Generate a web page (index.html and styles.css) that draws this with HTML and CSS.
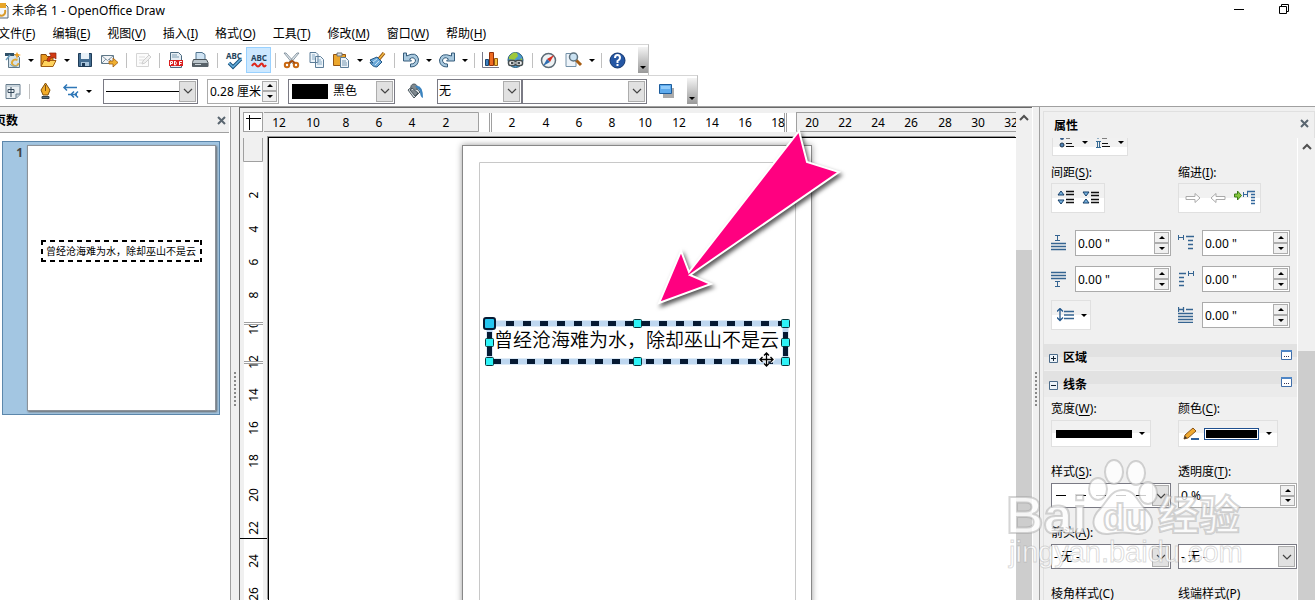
FILE: index.html
```html
<!DOCTYPE html>
<html lang="zh-CN">
<head>
    <meta charset="UTF-8">
    <meta name="viewport" content="width=device-width, initial-scale=1.0">
    <title>未命名 1 - OpenOffice Draw</title>
    <link rel="stylesheet" href="styles.css">
</head>
<body>
    <!-- Shared shapes -->
    <svg class="defs" width="0" height="0" aria-hidden="true">
        <symbol id="chevron" viewBox="0 0 10 6"><path d="M1 1l4 4 4-4" fill="none" stroke="#444" stroke-width="1.2"/></symbol>
        <symbol id="scroll-up" viewBox="0 0 10 6"><path d="M1 5.500l4-4 4 4" fill="none" stroke="#505050" stroke-width="2"/></symbol>
        <symbol id="close" viewBox="0 0 9 9"><path d="M1 1l7 7M8 1L1 8" stroke="#5a6670" stroke-width="2"/></symbol>
        <symbol id="more" viewBox="0 0 11 10"><path d="M.5 .5h10v9H.5z" fill="#fff" stroke="#3f6da8"/><path d="M0 0h11v2H0z" fill="#4f86c6"/><path d="M3 6h1v1H3zm2 0h1v1H5zm2 0h1v1H7z" fill="#335"/></symbol>
    </svg>

    <header class="titlebar">
        <svg width="9" height="16" viewBox="7 0 9 16"><path d="M0 1h12l3 3v11H0z" fill="#f5f7f9" stroke="#56697a"/><path d="M7 0h6v5H7z" fill="#e7a52a"/><path d="M6 12c4 2 7-1 6-5" fill="none" stroke="#d89b2c" stroke-width="2"/></svg>
        <h1>未命名 1 - OpenOffice Draw</h1>
        <div class="window-controls">
            <button aria-label="最小化"><svg width="11" height="11"><path d="M0 5.500h10" stroke="#000"/></svg></button>
            <button aria-label="还原"><svg width="11" height="11"><path d="M.5 2.500h7v7h-7zM2.500 2.500v-2h7v7h-2" fill="none" stroke="#000"/></svg></button>
        </div>
    </header>

    <nav class="menubar">
        <a href="#">文件(<u>F</u>)</a>
        <a href="#">编辑(<u>E</u>)</a>
        <a href="#">视图(<u>V</u>)</a>
        <a href="#">插入(<u>I</u>)</a>
        <a href="#">格式(<u>O</u>)</a>
        <a href="#">工具(<u>T</u>)</a>
        <a href="#">修改(<u>M</u>)</a>
        <a href="#">窗口(<u>W</u>)</a>
        <a href="#">帮助(<u>H</u>)</a>
    </nav>

    <!-- Standard toolbar -->
    <div class="toolbar standard">
        <button class="tool" aria-label="新建"><svg width="16" height="16"><path d="M3.500 2.500h8l3 3v10h-11z" fill="#d3e2ec" stroke="#607888"/><path d="M0 1h9v3H0z" fill="#2f5068"/><path d="M1 8l4-5" stroke="#6aa0c0" stroke-width="1.500"/><path d="M12 0l1 2 3 1-3 1-1 3-1-3-2-1 2-1z" fill="#f0a020"/><path d="M12.500 8c-5-2-8 4-3 6 3 0 4-2 4-3" fill="none" stroke="#e0aa38" stroke-width="2"/><path d="M5 12c1 2 4 3 7 2" fill="none" stroke="#76aacb"/></svg></button>
        <button class="drop" aria-label="新建选项"></button>
        <button class="tool" aria-label="打开"><svg width="17" height="16"><path d="M1 14V2.500h5l1 2h6V14z" fill="#e99a1e" stroke="#8a4b0c"/><path d="M1 14.500l3-6h12l-3 6z" fill="#ffd35c" stroke="#a05d10"/><path d="M7 9c0-3 1-4 4-5L9.500 1H16v6l-2-1.500c-3 0-4 1-4.500 4z" fill="#d33a13" stroke="#8c240a" stroke-width=".7"/></svg></button>
        <button class="drop" aria-label="打开选项"></button>
        <button class="tool" aria-label="保存"><svg width="16" height="16"><path d="M1.500 1.500h13v13h-13z" fill="#446d91" stroke="#1f3b57"/><path d="M4 1h8v6H4z" fill="#e8f1f8"/><path d="M4 10h8v4H4z" fill="#a9c5dc"/><path d="M5 11h3v3H5z" fill="#1f3b57"/></svg></button>
        <button class="tool" aria-label="邮件"><svg width="17" height="14"><path d="M.5 2.500h12v8H.5z" fill="#f3f5f7" stroke="#607888"/><path d="M1 3l5.500 4.500L12 3M1 10l4-4m7 4L8 6" fill="none" stroke="#8296a5"/><path d="M8 8h4V5l5 4.500L12 14v-3H8z" fill="#f0b030" stroke="#9c5b12" stroke-width=".8"/></svg></button>
        <span class="sep"></span>
        <button class="tool faded" aria-label="编辑文件"><svg width="16" height="16"><path d="M1.500 1.500h12v13h-12z" fill="#fafafa" stroke="#999"/><path d="M4 5h6M4 8h5M4 11h3" stroke="#aaa"/><path d="M7 12l1-3 6-6 2 2-6 6z" fill="#ddd" stroke="#888"/></svg></button>
        <span class="sep"></span>
        <button class="tool" aria-label="导出 PDF"><svg width="14" height="16"><path d="M1.500.5h8l3 3v12h-11z" fill="#e6eef4" stroke="#4c6a80"/><path d="M3 3h5M3 5h7" stroke="#7d9cb2"/><path d="M0 8h14v6H0z" fill="#d91f1f"/><path d="M1.500 13V9.500h2v2h-2M5.500 9v4h1q2-2 0-3.500h-1m5 3.500V9.500h2.500m-2 2h1.500" fill="none" stroke="#fff"/></svg></button>
        <button class="tool" aria-label="打印"><svg width="17" height="16"><path d="M4 8V.5h6l3 2V8z" fill="#cfe3f3" stroke="#51748f"/><path d="M1.500 7.500h13l1.500 3v4H.5v-4z" fill="#bcc6cc" stroke="#4a5359"/><path d="M1 11h15v4H1z" fill="#59636a"/><path d="M3 12.500h6" stroke="#cdd5da"/></svg></button>
        <span class="sep"></span>
        <button class="tool" aria-label="拼写检查"><svg width="18" height="17"><text class="abc" x="9" y="7">ABC</text><path d="M4 11l4 4 8-8" fill="none" stroke="#17517d" stroke-width="3.500"/><path d="M4 11l4 4 8-8" fill="none" stroke="#68b2e0" stroke-width="1.500"/></svg></button>
        <button class="tool active" aria-label="自动拼写检查"><svg width="18" height="17"><text class="abc" x="9" y="9">ABC</text><path d="M2 14q2-4 4-1t4 0 3 0 3 0" fill="none" stroke="#df291e" stroke-width="2.200"/></svg></button>
        <span class="sep"></span>
        <button class="tool" aria-label="剪切"><svg width="17" height="17"><path d="M1 1l2 0 9 10-2 1zM16 1l-2 0-9 10 2 1z" fill="#e3eaee" stroke="#718390" stroke-width=".8"/><circle cx="4" cy="13" r="2.200" fill="none" stroke="#c96913" stroke-width="2"/><circle cx="13" cy="13" r="2.200" fill="none" stroke="#c96913" stroke-width="2"/><path d="M6 11l3-2 3 2" fill="none" stroke="#a84b0b" stroke-width="2"/></svg></button>
        <button class="tool" aria-label="复制"><svg width="16" height="16"><path d="M1 .5h6l2 2v8H1zM6.500 4.500h5l3 3v8h-8z" fill="#edf4fa" stroke="#5c7d98"/><path d="M3 3h3M3 5h4M3 7h3M8 8h4M8 10h5M8 12h5" stroke="#89abc4"/></svg></button>
        <button class="tool" aria-label="粘贴"><svg width="17" height="16"><path d="M.5 2.500h12v11H.5z" fill="#eca72d" stroke="#945411"/><path d="M4 1h5v3H4z" fill="#dbe0e2" stroke="#6c7377"/><path d="M7.500 5.500h5l3 3v7h-8z" fill="#eef4fa" stroke="#5c7d98"/><path d="M9 9h4M9 11h5M9 13h5" stroke="#7899b1"/></svg></button>
        <button class="drop" aria-label="粘贴选项"></button>
        <button class="tool" aria-label="格式刷"><svg width="17" height="16"><path d="M10 7l5-6" stroke="#945411" stroke-width="3.500"/><path d="M10 7l5-6" stroke="#f0b844" stroke-width="1.500"/><path d="M1 8l7-3 5 5-5 5q-5 0-7-5 2 1 3 1z" fill="#6ba8d8" stroke="#245987"/><path d="M4 10l4-3m-2 6l4-4" stroke="#c9e3f5"/></svg></button>
        <span class="sep"></span>
        <button class="tool" aria-label="撤消"><svg width="16" height="16"><path d="M.5 1h3v3q10-5 12 3 0 8-8 8v-3q5 0 5-4-2-4-6-1l2 2H.5z" fill="#a9c9df" stroke="#365d7c"/></svg></button>
        <button class="drop" aria-label="撤消选项"></button>
        <button class="tool" aria-label="恢复"><svg width="16" height="16"><path d="M15.500 1h-3v3Q2 0 .5 8q0 7 8 7v-3q-5 0-5-4 2-4 6-1l-2 2h8z" fill="#a9c9df" stroke="#365d7c"/></svg></button>
        <button class="drop" aria-label="恢复选项"></button>
        <span class="sep"></span>
        <button class="tool" aria-label="图表"><svg width="17" height="16"><path d="M.5 0v15.500H17" fill="none" stroke="#778"/><path d="M3.500 7.500h3v6h-3z" fill="#3e7fc0" stroke="#1b466f"/><path d="M7.500 .5h4v13h-4z" fill="#ef6b21" stroke="#8f300c"/><path d="M12.500 6.500h3v7h-3z" fill="#f5bd3a" stroke="#935c10"/></svg></button>
        <button class="tool" aria-label="超链接"><svg width="17" height="17"><circle cx="8.500" cy="8" r="7.500" fill="#4d9bd0" stroke="#285b79"/><path d="M2 5q4-6 8-4l1 3-4 4-5-1zm9 4l4-3v4l-3 3z" fill="#9fc83a"/><rect x="1.500" y="8.500" width="7" height="5" rx="2" fill="#eee" stroke="#454d50" stroke-width="1.500"/><rect x="8.500" y="8.500" width="7" height="5" rx="2" fill="#eee" stroke="#454d50" stroke-width="1.500"/><path d="M4 11h9" stroke="#454d50" stroke-width="2"/><path d="M6 11h5" stroke="#fff"/></svg></button>
        <span class="sep"></span>
        <button class="tool" aria-label="导航"><svg width="17" height="17"><circle cx="8.500" cy="8.500" r="7" fill="#eef3f5" stroke="#5c6b76" stroke-width="1.500"/><path d="M14 3L7 7l3 3z" fill="#d72e22"/><path d="M3 14l4-7 3 3z" fill="#2e6db1"/></svg></button>
        <button class="tool" aria-label="缩放"><svg width="17" height="16"><path d="M1 1.500h10v13H1z" fill="#edf4fa" stroke="#7491a8"/><path d="M11 8l5 5" stroke="#a65c12" stroke-width="3"/><circle cx="8.500" cy="5" r="4" fill="#cae2f2" stroke="#5e7380" stroke-width="1.500"/></svg></button>
        <button class="drop" aria-label="缩放选项"></button>
        <span class="sep"></span>
        <button class="tool" aria-label="帮助"><svg width="17" height="17"><circle cx="8.500" cy="8.500" r="7.500" fill="#2557a4" stroke="#12356d"/><path d="M6 6q0-3 2.500-3T11 6q0 1.500-2.500 3v2m0 1v2" fill="none" stroke="#fff" stroke-width="2"/></svg></button>
        <button class="handle" aria-label="工具栏选项"></button>
    </div>

    <!-- Line and filling toolbar -->
    <div class="toolbar filling">
        <button class="tool" aria-label="样式和格式"><svg width="16" height="15"><path d="M1 .5h14v10l-4 4H1z" fill="#e9eff3" stroke="#667b8b"/><path d="M11 14v-4h4" fill="#c9d6df" stroke="#667b8b"/><path d="M3 5.500h6v3H3zM6 3v10" fill="none" stroke="#34485a"/><path d="M1 2h14" stroke="#a7b8c4"/></svg></button>
        <span class="sep"></span>
        <button class="tool" aria-label="线条"><svg width="11" height="17"><path d="M5.500 0L1 7l2 5h5l2-5z" fill="#f2ac28" stroke="#80500d"/><path d="M5.500 2v6" stroke="#80500d"/><path d="M2 13.500h7v2H2z" fill="#5a7385" stroke="#304250"/></svg></button>
        <button class="tool" aria-label="箭头样式"><svg width="16" height="14"><path d="M1 3.500h13M4 .5l-3 3 3 3" fill="none" stroke="#2f77b7" stroke-width="1.500"/><path d="M5 10.500h9M11 7.500l-3 3 3 3m4-6l-3 3 3 3" fill="none" stroke="#2f77b7" stroke-width="1.500"/></svg></button>
        <button class="drop" aria-label="箭头样式选项"></button>
        <label class="combo line-style"><select class="solid-line" aria-label="线条样式"><option></option></select><span class="combo-arrow"><svg width="10" height="6"><use href="#chevron"/></svg></span></label>
        <div class="spin line-width"><input type="text" aria-label="线条宽度" value="0.28 厘米"><div class="spin-buttons"><button aria-label="增加"></button><button aria-label="减少"></button></div></div>
        <label class="combo line-color"><span class="swatch"></span><select aria-label="线条颜色"><option>黑色</option></select><span class="combo-arrow"><svg width="10" height="6"><use href="#chevron"/></svg></span></label>
        <button class="tool" aria-label="区域"><svg width="17" height="17"><path d="M1 7l6-5 6 7-6 6z" fill="#d4dadd" stroke="#4b575e"/><path d="M4 7Q3 1 7 1t3 6M3 7l5 6 3-3-6-5z" fill="#7f898f" stroke="#49555d"/><path d="M8 3q8-2 8 12-3-1-3-7z" fill="#3a83bf"/></svg></button>
        <label class="combo area-style"><select aria-label="区域样式"><option>无</option></select><span class="combo-arrow"><svg width="10" height="6"><use href="#chevron"/></svg></span></label>
        <label class="combo area-fill"><select aria-label="区域填充"><option></option></select><span class="combo-arrow"><svg width="10" height="6"><use href="#chevron"/></svg></span></label>
        <button class="tool shadow-tool" aria-label="阴影"><svg width="16" height="14"><path d="M4 4h11v10H4z" fill="#aaa"/><path d="M.5 .5h12v9H.5z" fill="#5fabed" stroke="#1c5c9c"/><path d="M2 2h9v3H2z" fill="#91cbfa"/></svg></button>
        <button class="handle" aria-label="工具栏选项"></button>
    </div>

    <main>
        <!-- Page list -->
        <aside class="pages">
            <div class="pages-head">
                <h2>页数</h2>
                <button class="close" aria-label="关闭"><svg width="9" height="9"><use href="#close"/></svg></button>
            </div>
            <div class="thumb">
                <span class="thumb-number">1</span>
                <div class="thumb-page">
                    <p>曾经沧海难为水，除却巫山不是云</p>
                </div>
            </div>
        </aside>
        <div class="splitter"><i></i></div>

        <!-- Rulers and drawing area -->
        <section class="workspace">
            <div class="corner"><svg width="18" height="18"><path d="M2 5.500h15M5.500 2v15" stroke="#000"/></svg></div>
            <svg class="ruler-x" width="100%" height="20">
                <path d="M0 .5h214.500v19H0" fill="#f0f0f0" stroke="#a0a0a0"/>
                <path d="M215 1h318v19H215z" fill="#fff"/>
                <path d="M533 .5h1200v19H532.500V0" fill="#f0f0f0" stroke="#a0a0a0"/>
                <path d="M225.500 1v19M227.500 1v19M520.500 1v19M522.500 1v19" stroke="#a0a0a0"/>
                <text x="15" y="15">12</text><text x="49" y="15">10</text><text x="82" y="15">8</text><text x="115" y="15">6</text><text x="148" y="15">4</text><text x="182" y="15">2</text>
                <text x="248" y="15">2</text><text x="282" y="15">4</text><text x="315" y="15">6</text><text x="348" y="15">8</text><text x="381" y="15">10</text><text x="415" y="15">12</text><text x="448" y="15">14</text><text x="481" y="15">16</text><text x="514" y="15">18</text>
                <text x="548" y="15">20</text><text x="581" y="15">22</text><text x="614" y="15">24</text><text x="647" y="15">26</text><text x="681" y="15">28</text><text x="714" y="15">30</text><text x="747" y="15">32</text>
            </svg>
            <svg class="ruler-y" width="20" height="100%">
                <path d="M1 0h19v2000H1z" fill="#fff"/>
                <path d="M.5 0v23.500h19V0" fill="#f0f0f0" stroke="#a0a0a0"/>
                <g transform="rotate(-90)">
                    <text x="-57" y="15">2</text><text x="-91" y="15">4</text><text x="-124" y="15">6</text><text x="-157" y="15">8</text><text x="-190" y="15">10</text><text x="-224" y="15">12</text><text x="-257" y="15">14</text><text x="-290" y="15">16</text><text x="-323" y="15">18</text><text x="-357" y="15">20</text><text x="-390" y="15">22</text><text x="-423" y="15">24</text><text x="-456" y="15">26</text>
                </g>
                <path d="M1 182h19v4H1zM1 223h19v3H1z" fill="#fff"/>
                <path d="M1 184.500h19M1 186.500h19M1 223.500h19M1 225.500h19" stroke="#a0a0a0"/>
                <path d="M-3 400.500h27" stroke="#000"/>
            </svg>
            <div class="canvas">
                <svg width="100%" height="100%">
                    <rect class="sheet" x="193.500" y="7.500" width="349" height="900"/>
                    <path d="M210.500 900V24.500h316V900" fill="none" stroke="#c8c8c8"/>
                    <path d="M220.500 185.500h296v38h-296z" fill="none" stroke="#bed7f0" stroke-width="6"/>
                    <path d="M237 185.500h280M224 223.500h293" stroke="#061a33" stroke-width="5" stroke-dasharray="8 9"/>
                    <path d="M220.500 194v9M220.500 209v9M516.500 194v9M516.500 209v9" stroke="#061a33" stroke-width="5"/>
                    <text class="drawn-text" x="225" y="209">曾经沧海难为水，除却巫山不是云</text>
                    <rect x="215" y="180" width="11" height="11" rx="2" fill="#25c5f0" stroke="#061a33" stroke-width="2"/>
                    <g fill="#2ff3f7" stroke="#08363c">
                        <rect x="364.500" y="181.500" width="8" height="8" rx="1"/><rect x="512.500" y="181.500" width="8" height="8" rx="1"/>
                        <rect x="216.500" y="200.500" width="8" height="8" rx="1"/><rect x="512.500" y="200.500" width="8" height="8" rx="1"/>
                        <rect x="216.500" y="219.500" width="8" height="8" rx="1"/><rect x="364.500" y="219.500" width="8" height="8" rx="1"/><rect x="512.500" y="219.500" width="8" height="8" rx="1"/>
                    </g>
                    <g transform="translate(490 214)" fill="none">
                        <path d="M7.500 1v13M1 7.500h13M5 3.500L7.500 1 10 3.500M5 11.500L7.500 14 10 11.500M3.500 5L1 7.500 3.500 10M11.500 5L14 7.500 11.500 10" stroke="#fff" stroke-width="3.500"/>
                        <path d="M7.500 1v13M1 7.500h13M5 3.500L7.500 1 10 3.500M5 11.500L7.500 14 10 11.500M3.500 5L1 7.500 3.500 10M11.500 5L14 7.500 11.500 10" stroke="#000" stroke-width="1.300"/>
                    </g>
                    <path class="pointer" d="M530-7l8 31 32 10-149 103 21 9-52 19 22-52 8 21z"/>
                </svg>
            </div>
            <div class="scrollbar view-scroll"><svg width="10" height="7"><use href="#scroll-up"/></svg><i></i></div>
        </section>
        <div class="splitter right"><i></i></div>

        <!-- Properties -->
        <aside class="properties">
            <div class="props-head">
                <h2>属性</h2>
                <button class="close" aria-label="关闭"><svg width="9" height="9"><use href="#close"/></svg></button>
            </div>
            <div class="props-main">
                <div class="props-body">
                    <div class="group bullets">
                        <button aria-label="项目符号"><svg width="16" height="12"><circle cx="3" cy="1" r="2" fill="#335c8a"/><circle cx="3" cy="8" r="2" fill="#4e83b6" stroke="#1d344d"/><path d="M7 1h4M7 6.500h6M7 9.500h8" stroke="#111"/></svg></button>
                        <button class="drop" aria-label="项目符号选项"></button>
                        <button aria-label="编号"><svg width="16" height="12"><path d="M1 4.500h5M1 10.500h5M2.500 5v5M4.500 5v5M3 0v2" stroke="#356a94"/><path d="M7 1h5M7 6.500h6M7 9.500h8" stroke="#111"/></svg></button>
                        <button class="drop" aria-label="编号选项"></button>
                    </div>
                    <div class="columns">
                        <div>
                            <div class="label">间距(<u>S</u>):</div>
                            <div class="group">
                                <button aria-label="增大间距"><svg width="17" height="16"><path d="M1 5l3-4 3 4zM1 10h6l-3 4z" fill="#75b1df" stroke="#163f68"/><path d="M9 1.500h8M9 4.500h8M9 9.500h8M9 12.500h8" stroke="#111" stroke-width="1.400"/></svg></button>
                                <button aria-label="减小间距"><svg width="17" height="16"><path d="M1 2h6l-3 4zM1 13l3-4 3 4z" fill="#75b1df" stroke="#163f68"/><path d="M9 2.500h8M9 5.500h8M9 9.500h8M9 12.500h8" stroke="#111" stroke-width="1.400"/></svg></button>
                            </div>
                        </div>
                        <div>
                            <div class="label">缩进(<u>I</u>):</div>
                            <div class="group">
                                <button aria-label="增大缩进"><svg width="16" height="10"><path d="M1 3.500h9v-3l5 4.500-5 4.500v-3H1z" fill="#fff" stroke="#aaa"/></svg></button>
                                <button aria-label="减小缩进"><svg width="16" height="10"><path d="M15 3.500H6v-3L1 5l5 4.500v-3h9z" fill="#fff" stroke="#aaa"/></svg></button>
                                <button class="wide" aria-label="悬挂缩进"><svg width="21" height="16"><path d="M.5 4h3V1l4 4.500-4 4.500V7h-3z" fill="#86c83e" stroke="#3c7c16"/><path d="M9.500 2v5M9 4.500h4M13.500 2v5" stroke="#34689c"/><path d="M13 1.500h8M17 4.500h4M17 7.500h4M17 10.500h4M17 13.500h4" stroke="#34689c" stroke-width="1.500"/></svg></button>
                            </div>
                        </div>
                    </div>
                    <div class="columns fields">
                        <div class="field">
                            <svg width="16" height="16"><path d="M4 .5h5M6.500 0v6M4 5.500h5" stroke="#356491"/><path d="M0 8.500h15M0 11.500h15M0 14.500h15" stroke="#356491" stroke-width="1.500"/></svg>
                            <div class="spin"><input type="text" aria-label="段前间距" value='0.00 "'><div class="spin-buttons"><button aria-label="增加"></button><button aria-label="减少"></button></div></div>
                        </div>
                        <div class="field">
                            <svg width="16" height="16"><path d="M.5 0v5M0 2.500h5M5.500 0v5" stroke="#356491"/><path d="M8 1.500h8M10 5.500h5M10 9.500h5M10 13.500h5" stroke="#356491" stroke-width="1.500"/></svg>
                            <div class="spin"><input type="text" aria-label="文本前缩进" value='0.00 "'><div class="spin-buttons"><button aria-label="增加"></button><button aria-label="减少"></button></div></div>
                        </div>
                        <div class="field">
                            <svg width="16" height="16"><path d="M4 15.500h5M6.500 10v6M4 10.500h5" stroke="#356491"/><path d="M0 1.500h15M0 4.500h15M0 7.500h15" stroke="#356491" stroke-width="1.500"/></svg>
                            <div class="spin"><input type="text" aria-label="段后间距" value='0.00 "'><div class="spin-buttons"><button aria-label="增加"></button><button aria-label="减少"></button></div></div>
                        </div>
                        <div class="field">
                            <svg width="16" height="16"><path d="M10.500 0v5M10 2.500h5M15.500 0v5" stroke="#356491"/><path d="M1 2.500h7M1 6.500h5M1 10.500h5M1 14.500h5" stroke="#356491" stroke-width="1.500"/></svg>
                            <div class="spin"><input type="text" aria-label="文本后缩进" value='0.00 "'><div class="spin-buttons"><button aria-label="增加"></button><button aria-label="减少"></button></div></div>
                        </div>
                        <div class="group spacing">
                            <button aria-label="行距"><svg width="18" height="14"><path d="M3 1v11M0 3.500L3 .5l3 3M0 9.500l3 3 3-3" fill="none" stroke="#24588d" stroke-width="1.300"/><path d="M7 3.500h10M7 7h10M7 10.500h10" stroke="#356491" stroke-width="1.500"/></svg></button>
                            <button class="drop" aria-label="行距选项"></button>
                        </div>
                        <div class="field">
                            <svg width="16" height="16"><path d="M.5 0v5M0 2.500h5M5.500 0v5M8 2.500h7M0 6.500h15M0 9.500h15M0 12.500h15M0 15.500h15" stroke="#356491" stroke-width="1.300"/></svg>
                            <div class="spin"><input type="text" aria-label="首行缩进" value='0.00 "'><div class="spin-buttons"><button aria-label="增加"></button><button aria-label="减少"></button></div></div>
                        </div>
                    </div>

                    <div class="section-head">
                        <button aria-label="展开"><svg width="9" height="9"><path d="M.5 .5h8v8h-8z" fill="#edf3f8" stroke="#4c6b89"/><path d="M2 4.500h5M4.500 2v5" stroke="#123"/></svg></button>
                        <h3>区域</h3>
                        <button class="more" aria-label="更多选项"><svg width="11" height="10"><use href="#more"/></svg></button>
                    </div>
                    <div class="section-head">
                        <button aria-label="折叠"><svg width="9" height="9"><path d="M.5 .5h8v8h-8z" fill="#edf3f8" stroke="#4c6b89"/><path d="M2 4.500h5" stroke="#123"/></svg></button>
                        <h3>线条</h3>
                        <button class="more" aria-label="更多选项"><svg width="11" height="10"><use href="#more"/></svg></button>
                    </div>

                    <div class="columns line-props">
                        <div>
                            <div class="label">宽度(<u>W</u>):</div>
                            <div class="group picker">
                                <button class="bar-button" aria-label="宽度"><span class="bar"></span></button>
                                <button class="drop" aria-label="宽度选项"></button>
                            </div>
                        </div>
                        <div>
                            <div class="label">颜色(<u>C</u>):</div>
                            <div class="group picker">
                                <button class="bar-button" aria-label="颜色"><svg width="17" height="13"><path d="M1 12l1-4 8-7 3 3-8 7z" fill="#f0aa31" stroke="#8b551a"/><path d="M1 12l1-3 2 2z" fill="#333"/><path d="M8 12h8" stroke="#2e5f9b" stroke-width="2"/></svg><span class="bar framed"></span></button>
                                <button class="drop" aria-label="颜色选项"></button>
                            </div>
                        </div>
                        <div>
                            <label class="label" for="style">样式(<u>S</u>):</label>
                            <div class="combo"><select id="style" class="dashed-line"><option></option></select><span class="combo-arrow"><svg width="10" height="6"><use href="#chevron"/></svg></span></div>
                        </div>
                        <div class="to-edge">
                            <label class="label" for="transparency">透明度(<u>T</u>):</label>
                            <div class="spin"><input id="transparency" type="text" value="0 %"><div class="spin-buttons"><button aria-label="增加"></button><button aria-label="减少"></button></div></div>
                        </div>
                        <div>
                            <label class="label" for="arrow-start">箭头(<u>A</u>):</label>
                            <div class="combo"><select id="arrow-start"><option>- 无 -</option></select><span class="combo-arrow"><svg width="10" height="6"><use href="#chevron"/></svg></span></div>
                        </div>
                        <div class="to-edge">
                            <div class="label"></div>
                            <div class="combo"><select aria-label="箭头末端"><option>- 无 -</option></select><span class="combo-arrow"><svg width="10" height="6"><use href="#chevron"/></svg></span></div>
                        </div>
                        <div class="label">棱角样式(C)</div>
                        <div class="label">线端样式(P)</div>
                    </div>
                </div>
                <div class="scrollbar props-scroll"><svg width="10" height="7"><use href="#scroll-up"/></svg><i></i></div>
            </div>
        </aside>
    </main>

    <svg class="watermark" width="240" height="120">
        <g class="mark">
            <text x="1" y="76" font-size="52">Bai</text>
            <ellipse cx="93" cy="32" rx="9" ry="11"/>
            <ellipse cx="109" cy="15" rx="9" ry="12"/>
            <ellipse cx="131" cy="16" rx="9" ry="12"/>
            <ellipse cx="143" cy="36" rx="9" ry="11"/>
            <path d="M118 33c12 0 14 11 22 19 13 12 6 26-8 25-9-2-20-2-29 0-14 1-20-13-8-25 8-8 10-19 23-19z"/>
            <text x="98" y="73" font-size="36">du</text>
            <text class="cjk" x="153" y="73" font-size="41">经验</text>
        </g>
        <text class="site" x="4" y="105">jingyan.baidu.com</text>
    </svg>
</body>
</html>
```
FILE: styles.css
```css
* {
    margin: 0;
    padding: 0;
    box-sizing: border-box;
}

body {
    display: flex;
    flex-direction: column;
    position: relative;
    height: 100vh;
    overflow: hidden;
    background: #fff;
    color: #000;
    font-family: "Noto Sans", "Noto Sans CJK SC", sans-serif;
    font-size: 12px;
    line-height: 16px;
}

button {
    display: flex;
    align-items: center;
    justify-content: center;
    flex: none;
    border: none;
    background: none;
    font: inherit;
}

input,
select {
    flex: 1;
    min-width: 0;
    height: 100%;
    border: none;
    outline: none;
    background: #fff;
    color: #000;
    font: inherit;
    appearance: none;
}

svg {
    flex: none;
    display: block;
}

u {
    text-underline-offset: 2px;
}

.defs {
    position: absolute;
}

/* Title and menu */
.titlebar {
    display: flex;
    align-items: center;
    gap: 3px;
    height: 22px;
    flex: none;
}

.titlebar h1 {
    font-size: 12px;
    font-weight: 400;
}

.window-controls {
    display: flex;
    gap: 34px;
    margin: 0 25px 4px auto;
}

.menubar {
    display: flex;
    align-items: center;
    gap: 17px;
    height: 22px;
    flex: none;
    margin-left: -2px;
    padding-top: 2px;
}

.menubar a {
    color: #000;
    text-decoration: none;
}

/* Toolbars */
.toolbar {
    display: flex;
    align-items: center;
    align-self: flex-start;
    flex: none;
    border-top: 1px solid #d5d5d5;
    border-right: 1px solid #c0c0c0;
}

.standard {
    height: 31px;
    width: 649px;
}

.filling {
    height: 31px;
    width: 698px;
}

.tool {
    width: 25px;
    height: 26px;
}

.tool svg {
    overflow: visible;
}

.tool.active {
    background: #cce8ff;
    border: 1px solid #99d1ff;
}

.faded {
    opacity: 0.4;
}

.abc {
    font: bold 8px "Noto Sans", sans-serif;
    text-anchor: middle;
    fill: #24445c;
}

.drop {
    width: 11px;
    height: 20px;
}

.drop::before,
.handle::before {
    content: "";
    border: 3px solid transparent;
    border-top-color: #000;
    border-bottom: none;
}

.sep {
    width: 8px;
    height: 15px;
    flex: none;
    background: linear-gradient(#c0c0c0, #c0c0c0) no-repeat center / 1px 100%;
}

.handle {
    width: 10px;
    height: 26px;
    margin-left: auto;
    align-items: flex-end;
    padding-bottom: 4px;
    background: linear-gradient(#f4f4f4, #999);
}

.combo,
.spin {
    display: flex;
    align-items: center;
    height: 25px;
    flex: none;
    border: 1px solid #7a7a84;
    background: #fff;
}

.combo-arrow {
    display: flex;
    align-items: center;
    justify-content: center;
    width: 17px;
    height: 21px;
    flex: none;
    margin-right: 1px;
    border: 1px solid #adadad;
    background: #e1e1e1;
    pointer-events: none;
}

.spin {
    border-color: #ababab;
}

.spin input {
    padding-left: 2px;
}

.spin-buttons {
    display: flex;
    flex-direction: column;
    flex: none;
    width: 15px;
    margin-right: 1px;
    height: 100%;
    padding: 1px 0;
}

.spin-buttons button {
    flex: 1;
    border: 1px solid #adadad;
    background: #f0f0f0;
}

.spin-buttons button::before {
    content: "";
    border: 3px solid transparent;
    border-top: none;
    border-bottom-color: #000;
}

.spin-buttons button:last-child::before {
    transform: rotate(180deg);
}

.line-style {
    width: 95px;
    margin: 0 9px;
}

.solid-line {
    margin: 0 0 0 2px;
    background: linear-gradient(#000, #000) no-repeat center / 100% 1px;
}

.dashed-line {
    margin: 0 4px;
    background: repeating-linear-gradient(90deg, #000 0, #000 10px, transparent 10px, transparent 20px) no-repeat center / 100% 1px;
}

.line-width {
    width: 72px;
}

.line-color {
    width: 107px;
    margin: 0 8px 0 9px;
}

.swatch {
    width: 36px;
    height: 15px;
    margin: 0 5px 0 3px;
    background: #000;
}

.area-style {
    width: 85px;
    margin-left: 9px;
}

.area-style select {
    padding-left: 1px;
}

.area-fill {
    width: 125px;
}

.shadow-tool {
    margin-left: 7px;
}

/* Main area */
main {
    display: flex;
    flex: 1;
    min-height: 0;
    border-top: 1px solid #a0a0a0;
    background: #f0f0f0;
}

.pages {
    width: 231px;
    flex: none;
    border-right: 1px solid #a0a0a0;
    background: #fff;
}

.pages-head {
    display: flex;
    align-items: center;
    justify-content: space-between;
    height: 26px;
    margin-right: 1px;
    padding-top: 2px;
    border-bottom: 1px solid #a0a0a0;
    background: #f0f0f0;
}

.pages-head h2 {
    margin-left: -6px;
    font-size: 12px;
}

.close {
    width: 15px;
    height: 15px;
}

.thumb {
    display: flex;
    width: 218px;
    height: 274px;
    margin: 8px 0 0 2px;
    padding: 3px;
    border: 1px solid #5c87ab;
    background: #a3c6e2;
}

.thumb-number {
    width: 21px;
    padding-right: 4px;
    color: #444;
    font-weight: 700;
    text-align: right;
}

.thumb-page {
    flex: 1;
    padding: 94px 13px 0;
    border: 1px solid #8c9299;
    background: #fff;
    box-shadow: 1px 1px 2px #666;
}

.thumb-page p {
    padding: 3px 5px;
    background:
        repeating-linear-gradient(90deg, #000 0, #000 5px, transparent 5px, transparent 9px) top / 100% 2px no-repeat,
        repeating-linear-gradient(90deg, #000 0, #000 5px, transparent 5px, transparent 9px) bottom / 100% 2px no-repeat,
        repeating-linear-gradient(#000 0, #000 5px, transparent 5px, transparent 9px) left / 2px 100% no-repeat,
        repeating-linear-gradient(#000 0, #000 5px, transparent 5px, transparent 9px) right / 2px 100% no-repeat;
    font-size: 10px;
    line-height: 16px;
    white-space: nowrap;
}

.splitter {
    display: flex;
    align-items: center;
    justify-content: center;
    width: 8px;
    flex: none;
}

.splitter i {
    width: 2px;
    height: 34px;
    margin-top: 70px;
    background: repeating-linear-gradient(#888 0, #888 2px, transparent 2px, transparent 4px);
}

.splitter.right {
    border-left: 1px solid #fff;
    border-right: 1px solid #a0a0a0;
}

.workspace {
    display: grid;
    grid-template-columns: 20px 5px minmax(0, 1fr) 16px;
    grid-template-rows: 20px 5px minmax(0, 1fr);
    flex: 1;
    min-width: 0;
    position: relative;
    padding: 4px 0 0 3px;
    border-top: 1px solid #696969;
    border-left: 1px solid #696969;
}

.corner {
    border: 1px solid #a0a0a0;
    background: #fff;
}

.ruler-x {
    grid-column: 2 / 4;
    grid-row: 1;
    padding-left: 1px;
}

.ruler-x text,
.ruler-y text {
    font-size: 12px;
    text-anchor: middle;
}

.ruler-y {
    grid-column: 1;
    grid-row: 3;
    overflow: visible;
    padding-top: 1px;
}

.canvas {
    grid-column: 3;
    grid-row: 3;
    border-top: 1px solid #000;
    border-left: 1px solid #000;
    background: #fff;
    box-shadow: -1px -1px 0 #999;
}

.canvas svg {
    position: relative;
    overflow: visible;
}

.sheet {
    fill: #fff;
    stroke: #888;
    filter: drop-shadow(0 0 3px rgba(0, 0, 0, 0.4));
}

.drawn-text {
    font-family: "Noto Sans CJK SC", sans-serif;
    font-size: 19px;
    font-weight: 350;
}

.pointer {
    fill: #ff0080;
    stroke: #fff;
    stroke-width: 2px;
    filter: drop-shadow(2px 3px 2px rgba(0, 0, 0, 0.65));
}

.scrollbar {
    display: flex;
    flex-direction: column;
    align-items: center;
    background: #f0f0f0;
}

.scrollbar svg {
    margin-top: 5px;
}

.scrollbar i {
    width: 100%;
    flex: 1;
    background: #cdcdcd;
}

/* Runs from the top edge, beside the ruler */
.view-scroll {
    grid-column: 4;
    grid-row: 1 / 4;
    margin-top: -3px;
}

.view-scroll i {
    margin-top: 129px;
}

/* Properties */
.properties {
    display: flex;
    flex-direction: column;
    width: 275px;
    flex: none;
    padding: 4px 0 0 3px;
}

.props-head {
    display: flex;
    align-items: center;
    justify-content: space-between;
    height: 27px;
    flex: none;
    padding: 0 2px 0 10px;
    border: 1px solid #e0e0e0;
    border-bottom: none;
}

.props-head h2 {
    padding-top: 2px;
}

.props-head .close {
    margin-bottom: 4px;
}

.props-head h2,
.section-head h3 {
    font-size: 12px;
}

.props-main {
    display: flex;
    flex: 1;
    min-height: 0;
    border-left: 1px solid #e0e0e0;
}

.props-body {
    flex: 1;
    min-width: 0;
    overflow: hidden;
    border-right: 1px solid #fff;
}

.props-scroll {
    width: 17px;
    flex: none;
}

.props-scroll i {
    margin-top: 201px;
}

.group {
    display: flex;
    align-items: center;
    width: fit-content;
    height: 30px;
    padding: 0 1px;
    border: 1px solid #e0e0e0;
    background: linear-gradient(#f1f1f1 50%, #fff 50%);
}

.group button {
    width: 25px;
}

.group .drop {
    width: 11px;
}

.group .wide {
    width: 29px;
}

.bullets {
    height: 18px;
    margin-left: 8px;
    border-top: none;
    padding-bottom: 8px;
}

.columns {
    display: grid;
    grid-template-columns: 127px minmax(0, 1fr);
    padding: 9px 0 0 7px;
}

.label {
    display: block;
    height: 16px;
    margin-bottom: 2px;
}

.fields {
    row-gap: 10px;
    padding-top: 17px;
    padding-bottom: 16px;
}

.field {
    display: flex;
    align-items: center;
    gap: 8px;
    min-width: 0;
    height: 26px;
    margin-right: 7px;
}

.field .spin {
    flex: 1;
    min-width: 0;
    height: 26px;
}

.field input {
    width: 40px;
}

.spacing {
    align-self: center;
    margin: -2px 0;
}

.section-head {
    display: flex;
    align-items: center;
    gap: 5px;
    height: 26px;
    margin-bottom: 1px;
    padding: 2px 5px 0 5px;
    background: linear-gradient(#e2e2e2 50%, #ebebeb 50%);
}

.section-head h3 {
    flex: 1;
}

.more {
    margin-bottom: 6px;
}

.line-props {
    row-gap: 17px;
    padding-top: 3px;
}

.line-props .label {
    margin-bottom: 3px;
}

.line-props .combo,
.line-props .spin {
    margin-right: 7px;
}

.line-props .to-edge .combo,
.line-props .to-edge .spin {
    margin-right: 0;
}

.line-props select,
.line-props input {
    padding-left: 2px;
}

.picker {
    width: 100px;
    height: 27px;
}

.picker .bar-button {
    flex: 1;
    gap: 4px;
    padding: 0 3px;
}

.picker .drop {
    width: 14px;
}

.bar {
    flex: 1;
    height: 8px;
    background: #000;
}

.bar.framed {
    height: 12px;
    border: 1px solid #1f4f8f;
    box-shadow: inset 0 0 0 1px #fff;
}

.watermark {
    position: absolute;
    right: 70px;
    bottom: 23px;
    pointer-events: none;
}

.mark {
    fill: rgba(255, 255, 255, 0.8);
    stroke: rgba(150, 150, 150, 0.4);
    stroke-width: 2px;
    font-family: "Liberation Sans", sans-serif;
    font-weight: 700;
}

.mark .cjk {
    font-family: "Noto Sans CJK SC", sans-serif;
}

.site {
    fill: rgba(255, 255, 255, 0.8);
    stroke: rgba(150, 150, 150, 0.35);
    font: 29px "Liberation Sans", sans-serif;
}
```
